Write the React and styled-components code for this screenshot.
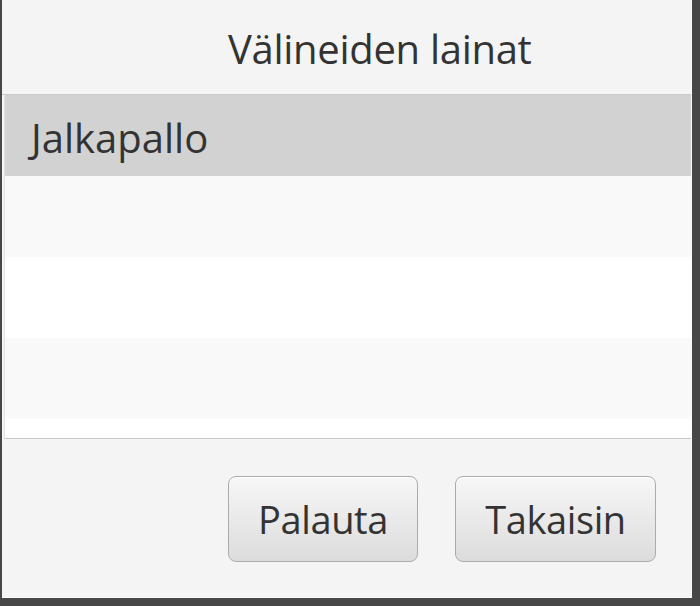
import styled, { createGlobalStyle } from 'styled-components';

const GlobalStyle = createGlobalStyle`
  html, body {
    margin: 0;
    padding: 0;
    background: #474747;
    height: 100%;
  }
  #root {
    height: 100%;
  }
`;

const Screen = styled.div`
  width: 700px;
  height: 606px;
  background: #474747;
  padding: 0 8px 8px 2px;
  box-sizing: border-box;
`;

const Window = styled.div`
  height: 100%;
  display: flex;
  flex-direction: column;
  background: #f4f4f4;
  border-right: 1px solid #fafafa;
  border-bottom: 1px solid #fafafa;
  box-sizing: border-box;
  font-family: "Open Sans", "Noto Sans", sans-serif;
  color: #333;
`;

const Header = styled.div`
  height: 95px;
  display: flex;
  align-items: center;
  padding-left: 226px;
  padding-top: 2px;
  box-sizing: border-box;
  font-size: 40px;
  letter-spacing: -0.3px;
  border-bottom: 1px solid #cbcbcb;
`;

const List = styled.div`
  height: 343px;
  margin-left: 2px;
  overflow: hidden;
  background: #ffffff;
  border-left: 1px solid #e2e2e2;
  border-bottom: 1px solid #c8c8c8;
`;

const Row = styled.div`
  height: 81px;
  display: flex;
  align-items: center;
  padding-left: 26px;
  padding-top: 4px;
  box-sizing: border-box;
  font-size: 40px;
  background: ${p => (p.selected ? '#d2d2d2' : p.odd ? '#f9f9f9' : '#ffffff')};
`;

const Footer = styled.div`
  flex: 1;
  display: flex;
  justify-content: flex-end;
  align-items: flex-start;
  gap: 37px;
  padding: 37px 35px 0 0;
`;

const Button = styled.button`
  width: ${p => p.w}px;
  height: 86px;
  padding: 0;
  font-family: "Open Sans", "Noto Sans", sans-serif;
  font-size: 38px;
  letter-spacing: -0.4px;
  color: #333;
  border: 1.5px solid #ababab;
  border-radius: 8px;
  background: linear-gradient(#f7f7f7, #dcdcdc);
  box-shadow: inset 0 1px 0 #ffffff;
`;

export default function App() {
  const rows = ['Jalkapallo', '', '', '', ''];
  return (
    <>
      <GlobalStyle />
      <Screen>
        <Window>
          <Header>Välineiden lainat</Header>
          <List>
            {rows.map((r, i) => (
              <Row key={i} selected={i === 0} odd={i % 2 === 1}>
                {r}
              </Row>
            ))}
          </List>
          <Footer>
            <Button w={190}>Palauta</Button>
            <Button w={201}>Takaisin</Button>
          </Footer>
        </Window>
      </Screen>
    </>
  );
}
